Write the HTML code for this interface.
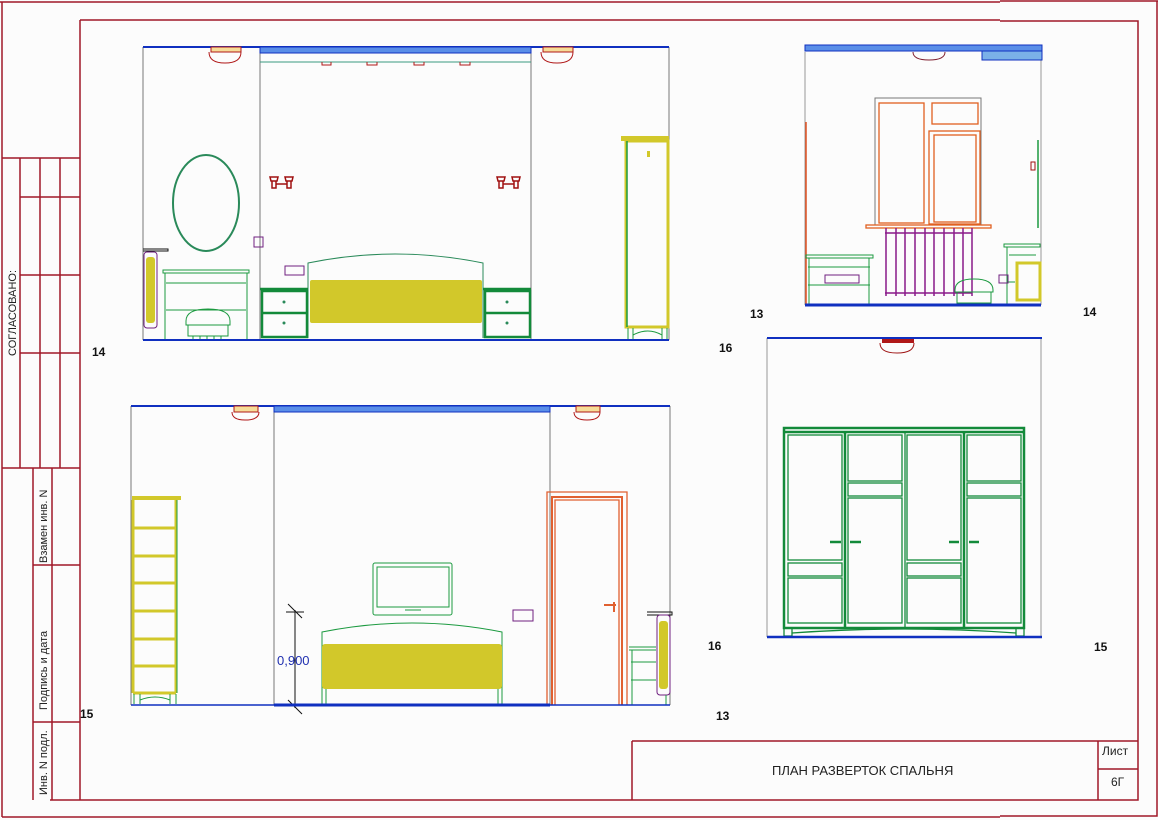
<!DOCTYPE html>
<html><head><meta charset="utf-8"><style>
html,body{margin:0;padding:0;background:#fcfcfc;}
svg{display:block}
text{font-family:"Liberation Sans",Arial,sans-serif}
</style></head><body>
<svg width="1158" height="820" viewBox="0 0 1158 820" xmlns="http://www.w3.org/2000/svg">
<rect width="1158" height="820" fill="#fcfcfc"/>
<g stroke="#a01828" stroke-width="1.5" fill="none">
<path d="M0 2H1000M1000 1H1158M2 2V817M2 817H1000M1000 816H1157V1"/>
<path d="M80 20H1000M1000 21H1138V800H50M80 20V800"/>
<path d="M2 158H80M20 158V468M40 158V468M60 158V468M20 197H80M20 275H80M20 353H80M2 468H80M33 468V800M52 468V800M33 565H80M33 722H80"/>
<path d="M632 741H1138M632 741V800M1098 741V800M1098 769H1138"/>
</g>
<g fill="#222" font-size="11">
<text transform="translate(16,356) rotate(-90)">СОГЛАСОВАНО:</text>
<text transform="translate(47,563) rotate(-90)">Взамен инв. N</text>
<text transform="translate(47,710) rotate(-90)">Подпись и дата</text>
<text transform="translate(47,795) rotate(-90)">Инв. N подл.</text>
<text x="772" y="775" font-size="13">ПЛАН РАЗВЕРТОК СПАЛЬНЯ</text>
<text x="1102" y="755" font-size="12">Лист</text>
<text x="1111" y="786" font-size="12">6Г</text>
</g>
<g fill="#111" font-size="12" font-weight="bold">
<text x="750" y="318">13</text><text x="1083" y="316">14</text>
<text x="719" y="352">16</text><text x="92" y="356">14</text>
<text x="708" y="650">16</text><text x="1094" y="651">15</text>
<text x="80" y="718">15</text><text x="716" y="720">13</text>
</g>

<!-- VIEW 1 -->
<g fill="none">
<path d="M143 47V340M260 47V340M531 47V340M669 47V340" stroke="#777" stroke-width="1"/>
<path d="M143 47H669" stroke="#1030c0" stroke-width="2"/>
<rect x="260" y="47" width="271" height="6" fill="#5a8ee8" stroke="#1030c0" stroke-width="1"/>
<path d="M260 62H531" stroke="#3a9a80"/>
<path d="M322 62v3h9v-3M367 62v3h10v-3M414 62v3h10v-3M460 62v3h10v-3" stroke="#b01818"/>
<g stroke="#b01818"><rect x="211" y="47" width="30" height="5" fill="#f6dc98"/><path d="M209 52q0 11 16 11q16 0 16-11"/>
<rect x="543" y="47" width="30" height="5" fill="#f6dc98"/><path d="M541 52q0 11 16 11q16 0 16-11"/></g>
<ellipse cx="206" cy="203" rx="33" ry="48" stroke="#2a8a5a" stroke-width="2"/>
<path d="M143 249H168V251H143" stroke="#111"/>
<rect x="144" y="252" width="13" height="76" rx="3" stroke="#702080"/>
<rect x="146" y="257" width="9" height="66" rx="3" fill="#d2c82a" stroke="none"/>
<g stroke="#1c9a40"><rect x="163" y="270" width="86" height="3"/><path d="M165 273V340M247 273V340M166 283H246M166 310H246"/>
<path d="M186 321q0-12 22-12q22 0 22 12v4H186zM188 325V336H228V325M193 336v4M200 336v4M207 336v4M214 336v4M221 336v4" />
<rect x="254" y="237" width="9" height="10" stroke="#702080"/>
<rect x="285" y="266" width="19" height="9" stroke="#702080"/></g>
<g stroke="#a01010" stroke-width="1.5">
<path d="M270 177h8l-1 4h-6zM285 177h8l-1 4h-6zM272 181v7h4v-7M287 181v7h4v-7M276 184h11"/>
<path d="M497 177h8l-1 4h-6zM512 177h8l-1 4h-6zM499 181v7h4v-7M514 181v7h4v-7M503 184h11"/></g>
<path d="M308 338V263Q395 245 483 263V338" stroke="#2a8a5a"/>
<rect x="310" y="280" width="172" height="43" rx="2" fill="#d2c82a"/>
<g stroke="#138a3a" stroke-width="2.5"><rect x="262" y="291" width="45" height="46"/><path d="M262 313H307M260 289H308"/>
<rect x="485" y="291" width="45" height="46"/><path d="M485 313H530M483 289H531"/></g>
<g fill="#2a8a5a"><circle cx="284" cy="302" r="1.5"/><circle cx="284" cy="323" r="1.5"/><circle cx="507" cy="302" r="1.5"/><circle cx="507" cy="323" r="1.5"/></g>
<rect x="621" y="136" width="48" height="5" fill="#d2c82a"/>
<rect x="626" y="141" width="42" height="186" stroke="#d2c82a" stroke-width="3"/>
<path d="M627 141V327" stroke="#1c9a40" stroke-width="1.5"/>
<rect x="647" y="151" width="3" height="6" fill="#d2c82a"/>
<path d="M628 328V339M633 328V339M662 328V339M667 328V339M633 335q15-8 29 0" stroke="#1c9a40"/>
<path d="M143 340H669" stroke="#1030c0" stroke-width="2"/>
</g>

<!-- VIEW 2 -->
<g fill="none">
<path d="M805 52V305M1041 52V305" stroke="#999"/>
<path d="M806 122V305" stroke="#e05020" stroke-width="1.5"/>
<rect x="805" y="45" width="237" height="6" fill="#5a8ee8" stroke="#1030c0"/>
<rect x="982" y="51" width="60" height="9" fill="#7ab0e8" stroke="#1030c0"/>
<path d="M913 52q0 8 16 8q16 0 16-8" stroke="#802030"/>
<rect x="875" y="98" width="106" height="127" stroke="#777"/>
<g stroke="#e06020" stroke-width="1.3"><rect x="879" y="103" width="45" height="120"/><rect x="932" y="103" width="46" height="21"/>
<rect x="929" y="131" width="51" height="93"/><rect x="934" y="135" width="42" height="87"/>
<rect x="866" y="225" width="125" height="3"/></g>
<g stroke="#8a1a8a" stroke-width="1.5"><path d="M886 228V296M896 228V296M905 228V296M915 228V296M925 228V296M934 228V296M944 228V296M954 228V296M963 228V296M972 228V296M885 233H972M885 293H972"/></g>
<g stroke="#1c9a40"><rect x="806" y="255" width="67" height="3"/><path d="M809 258V305M869 258V305M808 267H870M808 285H870"/>
<path d="M955 290q0-11 19-11q19 0 19 11v2H955zM957 292V303H991V292"/>
<rect x="1004" y="244" width="36" height="3"/><path d="M1007 247V305M1009 255H1036M1008 282H1015"/>
<path d="M1038 140V228" stroke-width="1.5"/></g>
<rect x="825" y="275" width="34" height="8" stroke="#702080"/>
<rect x="999" y="275" width="9" height="8" stroke="#702080"/>
<rect x="1017" y="263" width="23" height="37" stroke="#d2c82a" stroke-width="3"/>
<path d="M1031 162h4v8h-4z" stroke="#a01010"/>
<path d="M805 305H1041" stroke="#1030c0" stroke-width="3"/>
</g>

<!-- VIEW 3 -->
<g fill="none">
<path d="M767 338V637M1041 338V637" stroke="#999"/>
<path d="M767 338H1042" stroke="#1030c0" stroke-width="2"/>
<rect x="882" y="339" width="32" height="4" fill="#b01818"/>
<path d="M880 343q0 10 17 10q17 0 17-10" stroke="#a01818"/>
<g stroke="#138a3a" stroke-width="1.3">
<rect x="784" y="428" width="240" height="200" stroke-width="2.5"/><path d="M784 432H1024M845 432V627M964 432V627" stroke-width="2.5"/>
<path d="M905 432V627"/>
<rect x="788" y="435" width="54" height="125"/><rect x="788" y="563" width="54" height="13"/><rect x="788" y="578" width="54" height="45"/>
<rect x="848" y="435" width="54" height="46"/><rect x="848" y="483" width="54" height="13"/><rect x="848" y="498" width="54" height="125"/>
<rect x="907" y="435" width="54" height="125"/><rect x="907" y="563" width="54" height="13"/><rect x="907" y="578" width="54" height="45"/>
<rect x="967" y="435" width="54" height="46"/><rect x="967" y="483" width="54" height="13"/><rect x="967" y="498" width="54" height="125"/>
<path d="M784 628V636H792V628M1016 628V636H1024V628M792 633Q905 625 1016 633"/>
<path d="M830 542h11M850 542h11M949 542h10M969 542h10" stroke-width="2.5"/></g>
<path d="M767 637H1042" stroke="#1030c0" stroke-width="2.5"/>
</g>

<!-- VIEW 4 -->
<g fill="none">
<path d="M131 406V705M274 406V705M550 406V705M670 406V705" stroke="#777"/>
<path d="M131 406H670" stroke="#1030c0" stroke-width="2"/>
<rect x="274" y="406" width="276" height="6" fill="#5a8ee8" stroke="#1030c0"/>
<g stroke="#b01818"><rect x="234" y="406" width="24" height="6" fill="#f6dc98"/><path d="M232 412q0 8 13 8q14 0 14-8"/>
<rect x="576" y="406" width="24" height="6" fill="#f6dc98"/><path d="M574 412q0 8 13 8q13 0 13-8"/></g>
<rect x="132" y="496" width="49" height="4" fill="#d2c82a"/>
<g stroke="#d2c82a" stroke-width="3"><path d="M133 500V693M176 500V693M133 528H176M133 556H176M133 583H176M133 611H176M133 639H176M133 666H176M133 693H176"/></g>
<path d="M177 500V693" stroke="#1c9a40"/>
<path d="M134 694V704M140 694V704M170 694V704M176 694V704M140 700q15-6 30 0" stroke="#1c9a40"/>
<g stroke="#1c9a40"><rect x="373" y="563" width="79" height="52" rx="2"/><rect x="377" y="567" width="72" height="40"/><path d="M405 610h16"/>
<path d="M322 704V632Q412 614 502 632V704M326 689V704M498 689V704"/></g>
<rect x="322" y="644" width="180" height="45" rx="3" fill="#d2c82a"/>
<g stroke="#111"><path d="M295 610V708M286 612l18 0M288 604l14 14M286 706h18M288 700l14 14"/></g>
<text x="277" y="665" fill="#2030b0" font-size="13">0,900</text>
<rect x="513" y="610" width="20" height="11" stroke="#702080"/>
<g stroke="#e06030" stroke-width="1.3"><path d="M547 705V492H627V705"/><path d="M552 705V497H622V705" stroke-width="2"/><path d="M555 705V500H619V705"/></g>
<path d="M604 605h12M614 602v10" stroke="#e06030" stroke-width="2"/>
<path d="M647 612H672V615H647" stroke="#111"/>
<rect x="657" y="615" width="13" height="80" rx="3" stroke="#702080"/>
<rect x="659" y="621" width="9" height="68" rx="3" fill="#d2c82a"/>
<g stroke="#1c9a40"><path d="M629 647H656M629 650H656M632 650V705M631 662H656M631 680H656M666 695V705"/></g>
<path d="M131 705H670" stroke="#1030c0" stroke-width="1.5"/>
<path d="M274 705H550" stroke="#1030c0" stroke-width="3"/>
</g>
</svg>
</body></html>
